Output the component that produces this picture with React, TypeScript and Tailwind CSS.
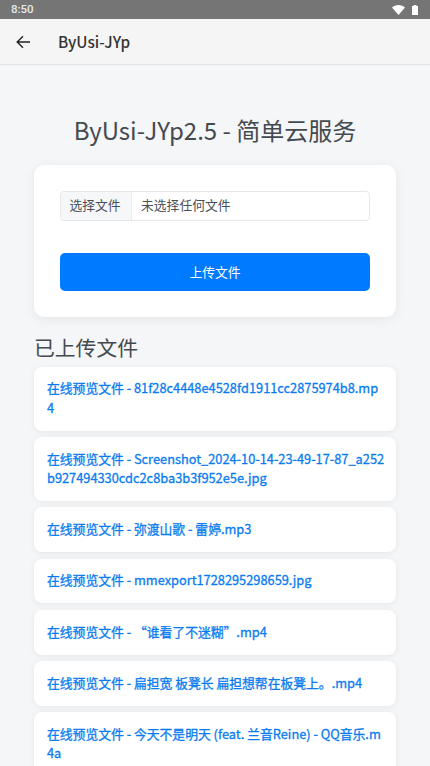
const FONT = "font-['Noto_Sans_CJK_SC','Noto_Sans',sans-serif]";

const files = [
  "81f28c4448e4528fd1911cc2875974b8.mp4",
  "Screenshot_2024-10-14-23-49-17-87_a252b927494330cdc2c8ba3b3f952e5e.jpg",
  "弥渡山歌 - 雷婷.mp3",
  "mmexport1728295298659.jpg",
  "“谁看了不迷糊”.mp4",
  "扁担宽 板凳长 扁担想帮在板凳上。.mp4",
  "今天不是明天 (feat. 兰音Reine) - QQ音乐.m4a",
];

export default function App() {
  return (
    <div className={`h-[766px] w-[430px] overflow-hidden bg-[#f4f6f7] ${FONT}`}>
      <div className="flex h-[19px] items-center justify-between bg-[#757575] pl-[11px] pr-[12px]">
        <span className="font-['Roboto',sans-serif] text-[11.5px] font-medium text-[#e8e8e8]">8:50</span>
        <div className="flex items-center gap-[7px]">
          <svg width="13" height="10" viewBox="0 0 13 10"><path d="M0 2.6C1.7 1 4 0 6.5 0S11.3 1 13 2.6L6.5 10z" fill="#fff" /></svg>
          <svg width="6" height="10" viewBox="0 0 6 10"><path d="M1.6 0H4.4V1H6V10H0V1H1.6z" fill="#fff" /></svg>
        </div>
      </div>
      <div className="flex h-[46px] items-center border-b border-[#e2e2e2] bg-[#f5f5f5]">
        <svg className="ml-[16px]" width="14" height="14" viewBox="0 0 14 14" fill="none" stroke="#222" strokeWidth="1.4">
          <path d="M14 7H1.2M7 1.2 1.2 7 7 12.8" />
        </svg>
        <span className="ml-[28px] text-[15.3px] font-medium text-[#333]">ByUsi-JYp</span>
      </div>
      <div className="px-[34px]">
        <h1 className="mt-[46px] text-center text-[24px] leading-[38px] text-[#454a50]">ByUsi-JYp2.5 - 简单云服务</h1>
        <div className="mt-[16px] rounded-[10px] bg-white p-[26px] shadow-[0_2px_12px_rgba(0,0,0,0.07)]">
          <div className="flex h-[30px] items-center overflow-hidden rounded-[4px] border border-[#e6e8ea] text-[12.8px] text-[#495057]">
            <span className="flex h-full w-[71px] items-center justify-center border-r border-[#e9ecef] bg-[#f6f7f8] pb-[2px] pr-[2px]">选择文件</span>
            <span className="ml-[9px] pb-[2px]">未选择任何文件</span>
          </div>
          <button className="mt-[32px] flex h-[38px] w-full items-center justify-center rounded-[5px] bg-[#007bff] pb-[1px] text-[12.8px] text-white">上传文件</button>
        </div>
        <h2 className="mt-[15px] text-[20.8px] leading-[30px] text-[#454a50]">已上传文件</h2>
        <ul className="mt-[4.6px] flex flex-col gap-[6.4px]">
          {files.map((f) => (
            <li key={f} className="rounded-[8px] bg-white pb-[13.8px] pl-[13px] pr-[11.8px] pt-[11.8px] shadow-[0_1px_6px_rgba(0,0,0,0.07)]">
              <a className="block break-all text-[12.8px] leading-[19.2px] text-[#0a7cf0] [-webkit-text-stroke:0.3px_#0a7cf0]">在线预览文件 - {f}</a>
            </li>
          ))}
        </ul>
      </div>
    </div>
  );
}
